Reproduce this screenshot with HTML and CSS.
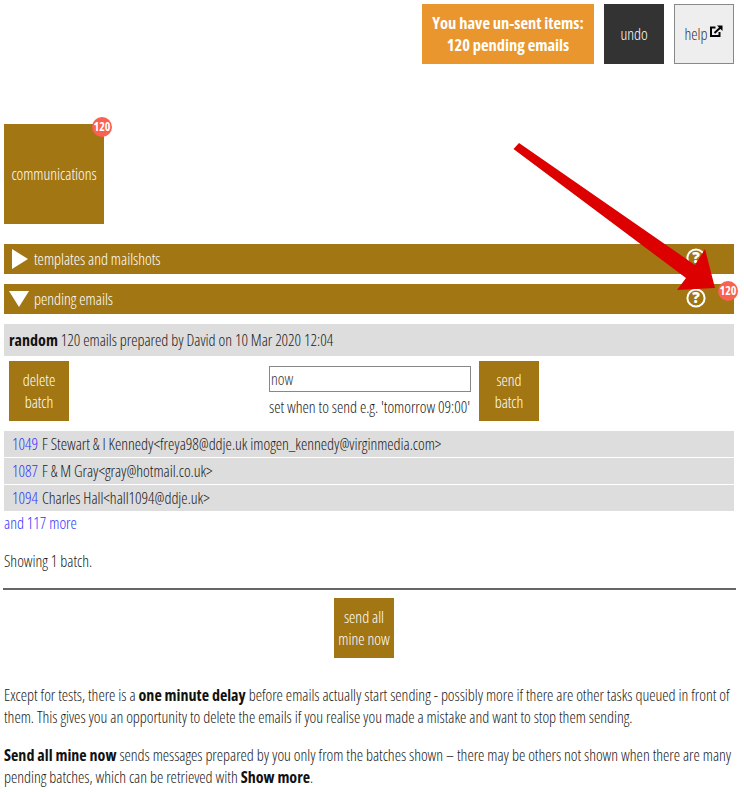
FILE: index.html
```html
<!DOCTYPE html>
<html lang="en">
<head>
  <meta charset="UTF-8" />
  <title>Communications</title>
  <link rel="stylesheet" href="styles.css">
</head>
<body>
  <div class="topbar">
    <div class="notice">You have un-sent items:<br>120 pending emails</div>
    <button class="btn dark">undo</button>
    <button class="btn light">help
      <svg class="extlink" width="13" height="12" viewBox="0 0 13 12"><path d="M5.5 2.5H1v8.5h8.5V7" fill="none" stroke="#000" stroke-width="2"/><path d="M4.5 8L11 2" fill="none" stroke="#000" stroke-width="2"/><path d="M7 0.5h5.5v5.5z" fill="#000"/></svg>
    </button>
  </div>

  <div class="tile">communications<span class="badge tile-badge">120</span></div>

  <div class="bar">
    <svg class="arrow" width="18" height="20" viewBox="0 0 18 20"><path d="M1 0L17 10L1 20z" fill="#fff"/></svg>
    <span class="bar-title">templates and mailshots</span>
    <svg class="qmark" width="20" height="20" viewBox="0 0 20 20"><circle cx="10" cy="10" r="8.6" fill="none" stroke="#fff" stroke-width="2"/><text x="10" y="15" class="qtext">?</text></svg>
  </div>
  <div class="bar">
    <svg class="arrow arrow-down" width="20" height="16" viewBox="0 0 20 16"><path d="M0 0H20L10 16z" fill="#fff"/></svg>
    <span class="bar-title">pending emails</span>
    <svg class="qmark" width="20" height="20" viewBox="0 0 20 20"><circle cx="10" cy="10" r="8.6" fill="none" stroke="#fff" stroke-width="2"/><text x="10" y="15" class="qtext">?</text></svg>
    <span class="badge bar-badge">120</span>
  </div>

  <div class="batch-head"><b>random</b> 120 emails prepared by David on 10 Mar 2020 12:04</div>
  <div class="batch-actions">
    <button class="btn gold">delete<br>batch</button>
    <div class="when">
      <input class="when-input" value="now">
      <div class="when-hint">set when to send e.g. 'tomorrow 09:00'</div>
    </div>
    <button class="btn gold">send<br>batch</button>
  </div>

  <div class="row"><a class="row-id" href="#">1049</a>F Stewart &amp; I Kennedy&lt;freya98@ddje.uk imogen_kennedy@virginmedia.com&gt;</div>
  <div class="row"><a class="row-id" href="#">1087</a>F &amp; M Gray&lt;gray@hotmail.co.uk&gt;</div>
  <div class="row"><a class="row-id" href="#">1094</a>Charles Hall&lt;hall1094@ddje.uk&gt;</div>
  <a class="more" href="#">and 117 more</a>

  <p class="showing">Showing 1 batch.</p>
  <hr class="rule">
  <div class="send-all"><button class="btn gold">send all<br>mine now</button></div>

  <p class="note">Except for tests, there is a <b>one minute delay</b> before emails actually start sending - possibly more if there are other tasks queued in front of them. This gives you an opportunity to delete the emails if you realise you made a mistake and want to stop them sending.</p>
  <p class="note"><b>Send all mine now</b> sends messages prepared by you only from the batches shown – there may be others not shown when there are many pending batches, which can be retrieved with <b>Show more</b>.</p>

  <svg class="pointer" width="744" height="792" viewBox="0 0 744 792"><path d="M519 143L695 265L705 249L715 288L677 290L686 278L513.5 149Z" fill="#d00"/></svg>
</body>
</html>
```

FILE: styles.css
```css
body {
  margin: 0;
  padding: 4px 10px 0 4px;
  position: relative;
  height: 788px;
  overflow: hidden;
  font-family: 'Open Sans', sans-serif;
  font-stretch: 75%;
  font-weight: 300;
  font-size: 16px;
  line-height: 22px;
  letter-spacing: -0.03px;
  color: #1a1a1a;
  background: #fff;
}

a {
  color: #33f;
  text-decoration: none;
}

b {
  font-weight: 700;
  letter-spacing: 0.02px;
  color: #111;
}

.topbar {
  display: flex;
  justify-content: flex-end;
  gap: 10px;
  height: 60px;
}

.notice {
  width: 172px;
  background: #e9962e;
  color: #fff;
  font-weight: 700;
  font-size: 16.5px;
  text-align: center;
  padding: 8px 0;
  box-sizing: border-box;
}

.btn {
  width: 60px;
  height: 60px;
  padding: 0;
  border: none;
  font: inherit;
  font-stretch: inherit;
  letter-spacing: inherit;
  text-align: center;
  cursor: pointer;
}

.dark {
  background: #333;
  color: #fff;
}

.light {
  background: #eee;
  color: #333;
  border: 1px solid #888;
}

.extlink {
  vertical-align: 3px;
}

.gold {
  background: #a27613;
  color: #fff;
}

.tile {
  position: relative;
  width: 100px;
  height: 100px;
  margin-top: 60px;
  background: #a27613;
  color: #fff;
  display: flex;
  align-items: center;
  justify-content: center;
}

.badge {
  position: absolute;
  width: 20px;
  height: 20px;
  border-radius: 50%;
  background: #f96150;
  color: #fff;
  font-size: 12px;
  font-weight: 700;
  line-height: 20px;
  text-align: center;
}

.tile-badge {
  top: -7px;
  right: -8px;
}

.bar {
  position: relative;
  display: flex;
  align-items: center;
  width: 730px;
  height: 30px;
  margin-top: 20px;
  background: #a27613;
  color: #fff;
}

.bar + .bar {
  margin-top: 10px;
}

.arrow {
  margin-left: 6px;
  margin-right: 4px;
  width: 20px;
}

.arrow-down {
  margin-left: 5px;
  margin-right: 5px;
}

.qmark {
  position: absolute;
  right: 28px;
  top: 4px;
}

.qtext {
  fill: #fff;
  font-size: 15px;
  font-weight: 800;
  font-stretch: 100%;
  text-anchor: middle;
}

.bar-badge {
  top: -3px;
  right: -4px;
}

.batch-head {
  width: 725px;
  height: 32px;
  line-height: 32px;
  margin-top: 10px;
  padding-left: 5px;
  background: #ddd;
}

.batch-actions {
  display: flex;
  margin: 5px 0 10px 5px;
}

.when {
  width: 202px;
  margin: 5px 8px 0 200px;
  white-space: nowrap;
}

.when-input {
  display: block;
  width: 202px;
  height: 26px;
  box-sizing: border-box;
  padding: 0 1px;
  border: 1px solid #888;
  font: inherit;
  font-stretch: inherit;
  color: #333;
}

.when-hint {
  margin-top: 4px;
}

.row {
  width: 722px;
  height: 26px;
  line-height: 26px;
  margin-bottom: 1px;
  padding-left: 8px;
  background: #ddd;
}

.row-id {
  margin-right: 4px;
}

.more {
  display: block;
  margin-top: 1px;
}

.showing {
  margin: 16px 0 0;
}

.rule {
  width: 733px;
  height: 2px;
  margin: 16px 0 0 -1px;
  border: none;
  background: #666;
}

.send-all {
  margin-top: 8px;
  padding-left: 330px;
}

.note {
  margin: 0 0 16px;
  width: 732px;
}

.send-all + .note {
  margin-top: 26px;
}

.pointer {
  position: absolute;
  left: 0;
  top: 0;
}
```
